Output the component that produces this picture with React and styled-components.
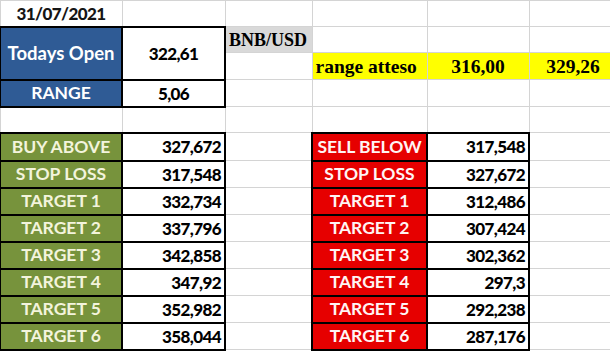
import React from "react"
import styled, { createGlobalStyle } from "styled-components"

const GlobalStyle = createGlobalStyle`
  html, body {
    margin: 0;
    padding: 0;
    background: #fff;
    overflow: hidden;
  }
`

const fills = {
  blue: "#2f5b95",
  green: "#77933c",
  red: "#e60000",
  yellow: "#ffff00",
  gray: "#d9d9d9",
}

const inks = {
  blue: "#ffffff",
  green: "#f3f4dc",
  red: "#fff4f4",
}

const buyLevels = [
  ["BUY ABOVE", "327,672"],
  ["STOP LOSS", "317,548"],
  ["TARGET 1", "332,734"],
  ["TARGET 2", "337,796"],
  ["TARGET 3", "342,858"],
  ["TARGET 4", "347,92"],
  ["TARGET 5", "352,982"],
  ["TARGET 6", "358,044"],
]

const sellLevels = [
  ["SELL BELOW", "317,548"],
  ["STOP LOSS", "327,672"],
  ["TARGET 1", "312,486"],
  ["TARGET 2", "307,424"],
  ["TARGET 3", "302,362"],
  ["TARGET 4", "297,3"],
  ["TARGET 5", "292,238"],
  ["TARGET 6", "287,176"],
]

const levelHeights = [28, 27, 27, 27, 27, 27, 27, 27]

const App = () => (
  <>
    <GlobalStyle />
    <Sheet>
      <colgroup>
        <col width="122" />
        <col width="103" />
        <col width="87" />
        <col width="115" />
        <col width="102" />
        <col width="88" />
      </colgroup>
      <tbody>
        <Row $h={26}>
          <Value $dark>31/07/2021</Value>
          <Cell />
          <Cell />
          <Cell />
          <Cell />
          <Cell />
        </Row>
        <Row $h={26}>
          <Label rowSpan={2} $fill="blue" $boxed $big>Todays Open</Label>
          <Value rowSpan={2} $boxed>322,61</Value>
          <SerifCell $fill="gray" $small>BNB/USD</SerifCell>
          <Cell />
          <Cell />
          <Cell />
        </Row>
        <Row $h={27}>
          <Cell />
          <SerifCell $fill="yellow">range atteso</SerifCell>
          <SerifCell $fill="yellow" $align="center">316,00</SerifCell>
          <SerifCell $fill="yellow" $align="center">329,26</SerifCell>
        </Row>
        <Row $h={27}>
          <Label $fill="blue" $boxed>RANGE</Label>
          <Value $boxed>5,06</Value>
          <Cell />
          <Cell />
          <Cell />
          <Cell />
        </Row>
        <Row $h={26}>
          <Cell />
          <Cell />
          <Cell />
          <Cell />
          <Cell />
          <Cell />
        </Row>
        {buyLevels.map(([buyLabel, buyValue], i) => (
          <Row key={buyLabel + i} $h={levelHeights[i]}>
            <Label $fill="green" $boxed>{buyLabel}</Label>
            <Value $boxed $align="right">{buyValue}</Value>
            <Cell />
            <Label $fill="red" $boxed>{sellLevels[i][0]}</Label>
            <Value $boxed $align="right">{sellLevels[i][1]}</Value>
            <Cell />
          </Row>
        ))}
      </tbody>
    </Sheet>
  </>
)

export default App

const Sheet = styled.table`
  border-collapse: collapse;
  table-layout: fixed;
  width: 617px;
  margin: 0 0 0 -1px;
  font-family: Lato, "Liberation Sans", sans-serif;
`

const Row = styled.tr`
  height: ${props => props.$h}px;
`

const Cell = styled.td`
  border: ${props => (props.$boxed ? "2px solid #000" : "1px solid #d4d4d4")};
  background: ${props => fills[props.$fill] || "#fff"};
  color: ${props => inks[props.$fill] || "#000"};
  padding: 0 3px;
  text-align: ${props => props.$align || "center"};
  vertical-align: middle;
  font-weight: 700;
  white-space: nowrap;
  overflow: hidden;
  line-height: 1;
`

const Label = styled(Cell)`
  font-size: ${props => (props.$big ? "18.5px" : "17.5px")};
`

const Value = styled(Cell)`
  font-size: 17px;
  font-weight: 900;
  letter-spacing: -0.6px;
  color: ${props => (props.$dark ? "#151515" : "#000")};
`

const SerifCell = styled(Cell)`
  font-family: "Liberation Serif", "Times New Roman", serif;
  font-size: ${props => (props.$small ? "18px" : "19.5px")};
  text-align: ${props => props.$align || "left"};
  vertical-align: bottom;
  padding: 0 3px 3px;
  color: #000;
`
